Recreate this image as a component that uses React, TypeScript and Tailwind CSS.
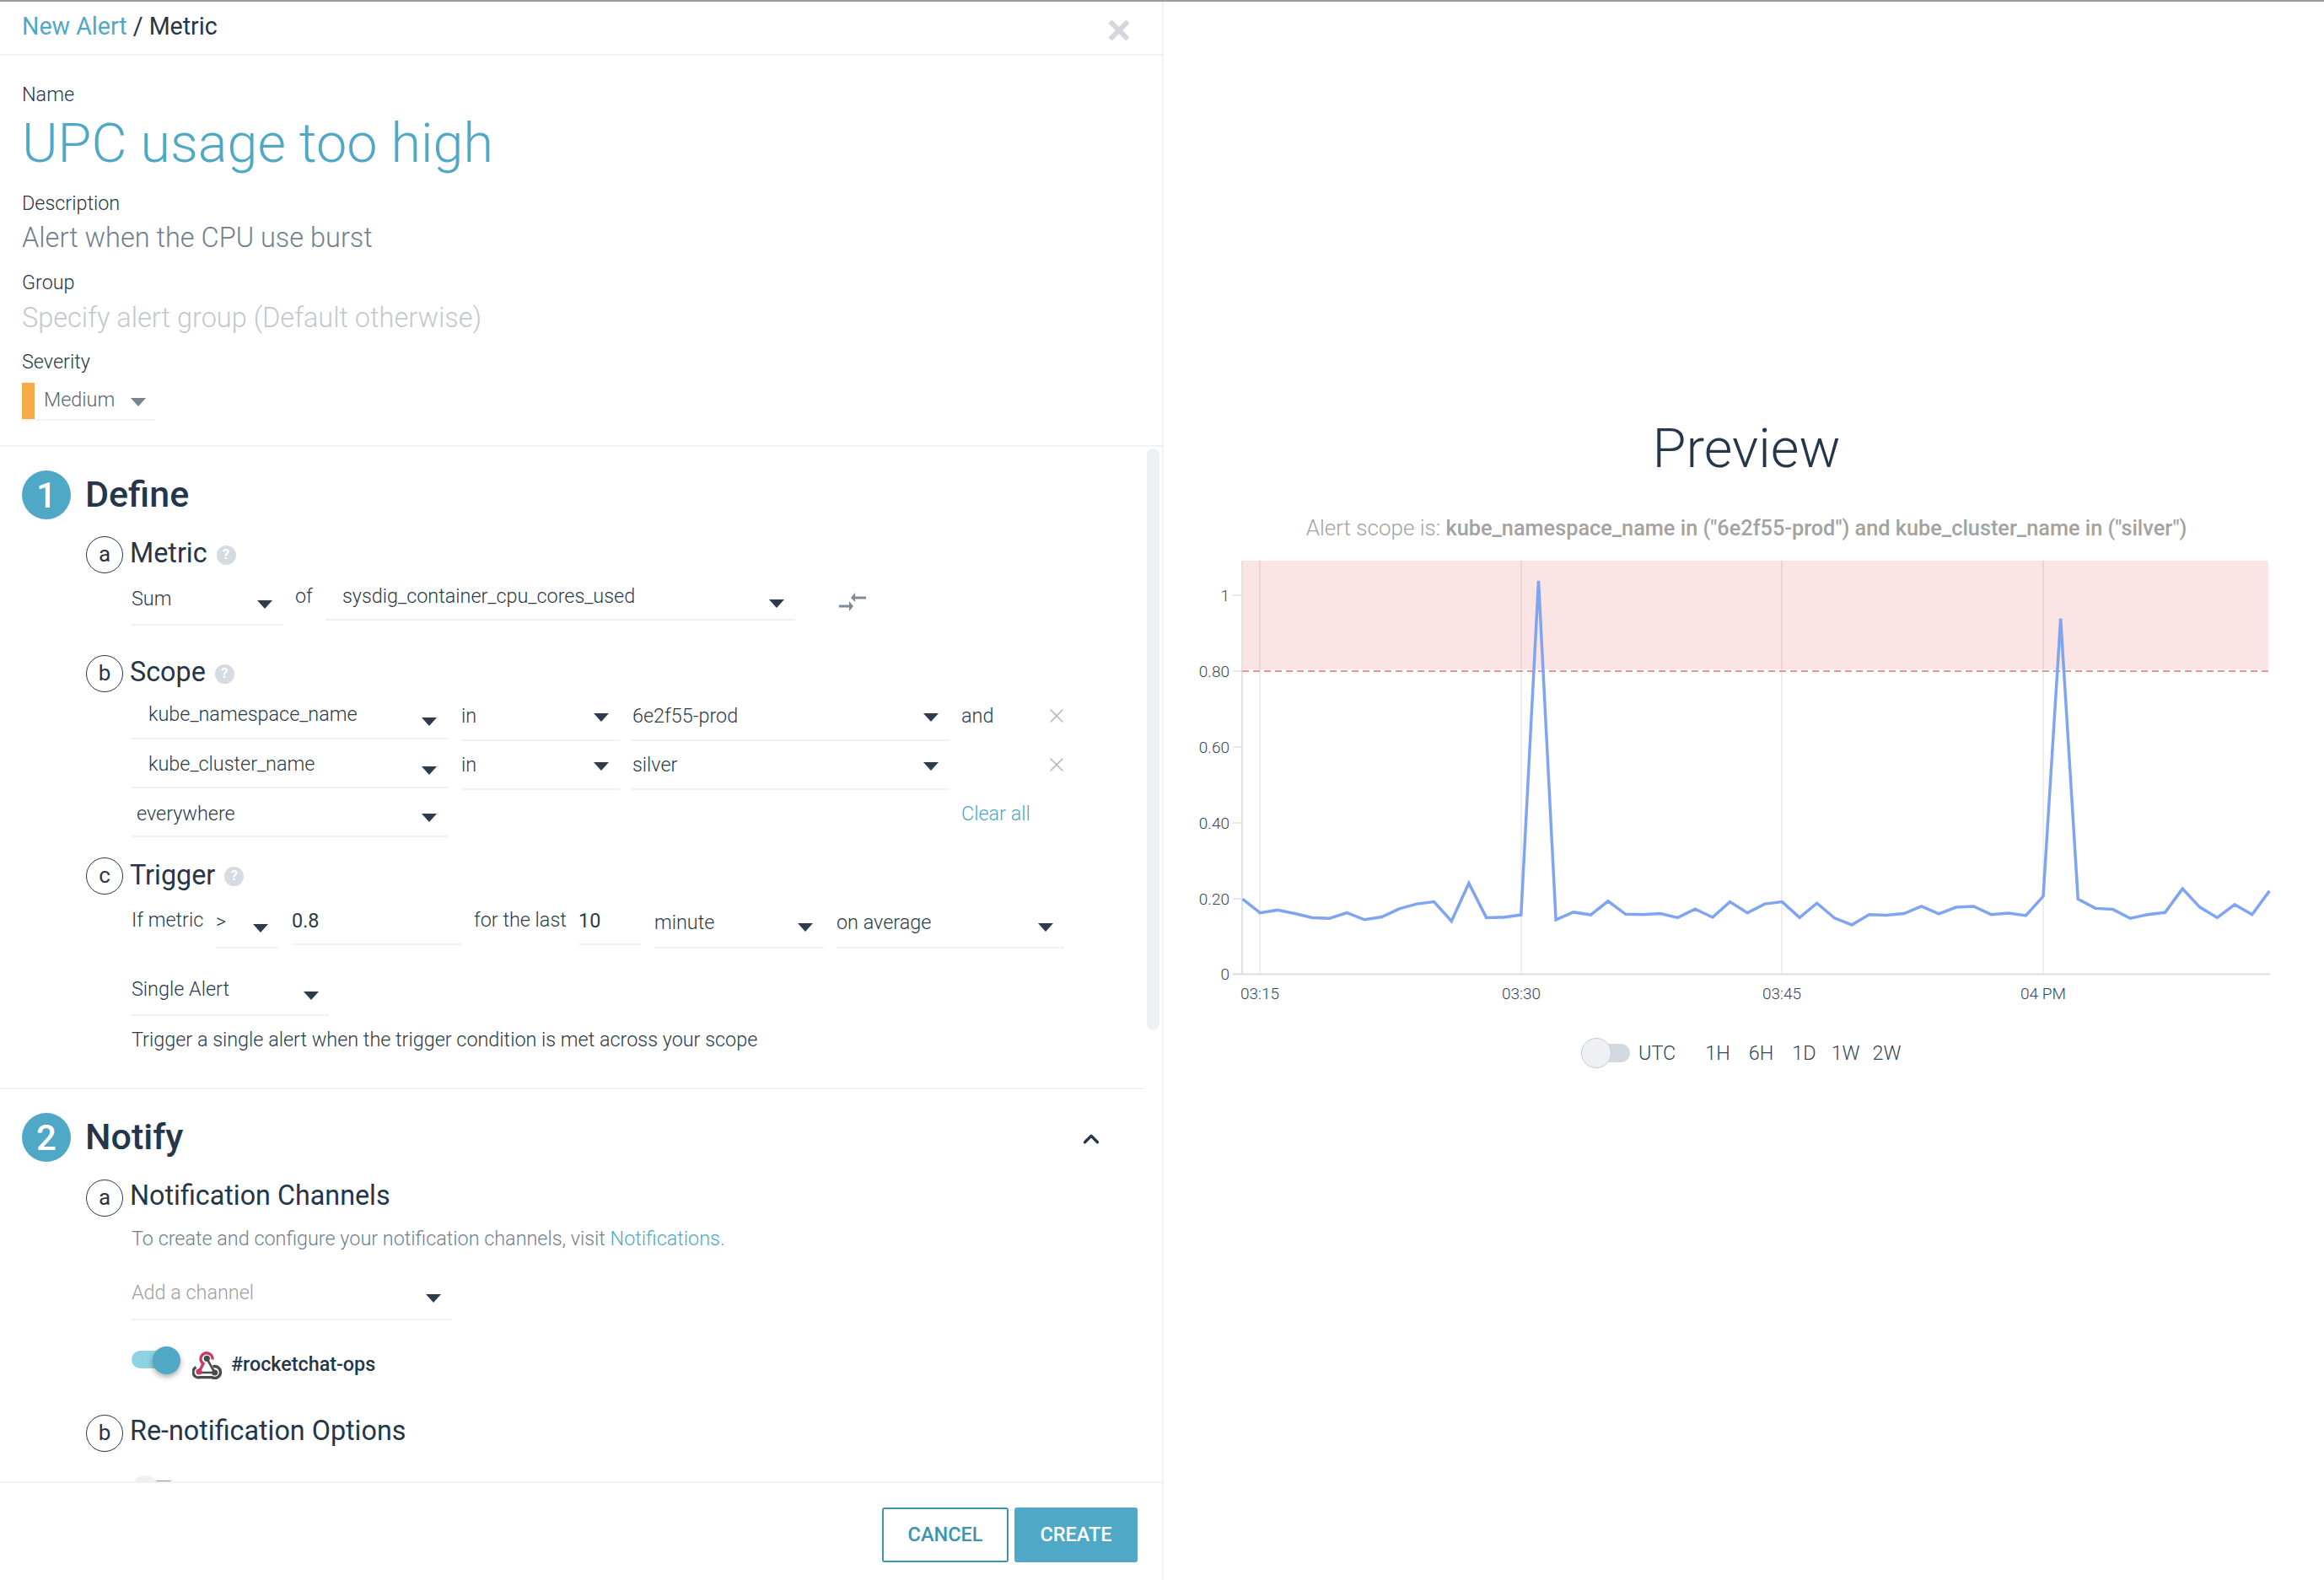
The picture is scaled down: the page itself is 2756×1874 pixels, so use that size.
import { ChevronUp, X } from 'lucide-react'

const fontStack = { fontFamily: 'Roboto, "Noto Sans", sans-serif' }

// values read off the reference at one minute steps
const SERIES = [
  1047, 1087, 1079, 1089, 1101, 1103, 1087, 1107, 1099, 1075, 1061, 1055, 1111, 1001, 1101, 1100, 1093, 122,
  1107, 1085, 1093, 1053, 1091, 1092, 1089, 1101, 1076, 1100, 1055, 1087, 1061, 1055, 1101, 1059, 1102, 1122,
  1092, 1094, 1089, 1068, 1090, 1071, 1068, 1092, 1088, 1095, 1039, 232, 1047, 1074, 1077, 1103, 1092, 1086,
  1017, 1071, 1101, 1063, 1092, 1023,
]

const points = SERIES.map((z, i) => `${(1473.6 + i * 20.64).toFixed(1)},${(640 + z / 2.45).toFixed(1)}`).join(' ')

function Caret({ className = '', color = '#2d3b4c' }: { className?: string; color?: string }) {
  return (
    <svg width="18" height="10" viewBox="0 0 18 10" className={`shrink-0 ${className}`}>
      <path d="M0 0h18L9 10z" fill={color} />
    </svg>
  )
}

function Sel({
  text,
  className,
  caret,
  textClass = 'text-[#2b3a4b]',
}: {
  text: string
  className: string
  caret?: string
  textClass?: string
}) {
  return (
    <div className={`flex shrink-0 items-start justify-between border-b-2 border-[#eff1f4] ${className}`}>
      <span className={`text-[23.4px] leading-[30px] font-light ${textClass}`}>{text}</span>
      {caret && <Caret className={caret} />}
    </div>
  )
}

function Step({ n, label }: { n: string; label: string }) {
  return (
    <div className="flex h-[58px] items-center">
      <div className="flex h-[58px] w-[58px] shrink-0 items-center justify-center rounded-full bg-[#4fa8c5] text-[42px] font-medium text-white">
        {n}
      </div>
      <span className="ml-[17px] pb-[2px] text-[43px] font-medium text-[#26364a]">{label}</span>
    </div>
  )
}

function Help({ className }: { className: string }) {
  return (
    <span
      className={`flex h-[23px] w-[23px] items-center justify-center rounded-full bg-[#d5dbe3] text-[17px] font-bold text-white ${className}`}
    >
      ?
    </span>
  )
}

function SubHead({
  letter,
  label,
  help,
  className = '',
  labelClass = 'pb-[4px]',
}: {
  letter: string
  label: string
  help?: boolean
  className?: string
  labelClass?: string
}) {
  return (
    <div className={`flex h-[44px] items-center ${className}`}>
      <div className="flex h-[44px] w-[44px] shrink-0 items-center justify-center rounded-full border border-[#26364a] pb-[2px] text-[26px] text-[#26364a]">
        {letter}
      </div>
      <span className={`ml-[8px] text-[32.3px] text-[#26364a] ${labelClass}`}>{label}</span>
      {help && <Help className="ml-[11px]" />}
    </div>
  )
}

function RowX() {
  return <X size={28} strokeWidth={1.3} color="#b5b5b5" className="mt-[14px] shrink-0" />
}

function WebhookIcon() {
  return (
    <svg width="36" height="33" viewBox="0 0 36 33" fill="none" className="mt-[6px] shrink-0">
      <path d="M8 24L13 14.500A7 7 0 1 1 24 9.500" stroke="#c73a63" strokeWidth="3.4" />
      <path d="M17.3 8.300L26.7 25H9" stroke="#4b4b4b" strokeWidth="2.6" />
      <path d="M24.500 17.800A7 7 0 1 1 23 30.600H9A6.500 6.500 0 0 1 4.500 18.500" stroke="#4b4b4b" strokeWidth="3.4" />
      <circle cx="17.3" cy="8.300" r="3.6" fill="#4b4b4b" />
      <circle cx="8" cy="24" r="3.6" fill="#c73a63" />
      <circle cx="26.7" cy="25" r="3.6" fill="#4b4b4b" />
    </svg>
  )
}

function SwapIcon() {
  return (
    <svg width="32" height="22" viewBox="0 0 32 22" className="ml-[52px] mt-[23px] shrink-0" fill="#7a8a9a">
      <path d="M32 4.500v3H19V11l-5-5 5-6v4.500z" />
      <path d="M0 14.500h12V10l5 6-5 6v-4.500H0z" />
    </svg>
  )
}

function Chart() {
  const yTicks: [string, number][] = [
    ['1', 707],
    ['0.80', 797],
    ['0.60', 887],
    ['0.40', 977],
    ['0.20', 1067],
    ['0', 1156],
  ]
  const xTicks: [string, number][] = [
    ['03:15', 1494],
    ['03:30', 1804],
    ['03:45', 2113],
    ['04 PM', 2423],
  ]
  return (
    <svg width="1376" height="550" viewBox="1380 650 1376 550" className="block" style={fontStack}>
      <rect x="1473" y="666" width="1217" height="129" fill="#fbe5e4" />
      {xTicks.map(([, x]) => (
        <line key={x} x1={x} x2={x} y1="666" y2="1156" stroke="#000" strokeOpacity="0.09" strokeWidth="1.500" />
      ))}
      <line x1="1473" x2="1473" y1="666" y2="1156" stroke="#e2e2e2" strokeWidth="2" />
      <line x1="1462" x2="2692" y1="1156.500" y2="1156.500" stroke="#dddddd" strokeWidth="2" />
      <line x1="1473" x2="2690" y1="797" y2="797" stroke="#f5918c" strokeWidth="2" strokeDasharray="8 5" />
      {yTicks.map(([label, y]) => (
        <g key={label}>
          <line x1="1462" x2="1473" y1={y} y2={y} stroke="#e2e2e2" strokeWidth="1.500" />
          <text x="1458" y={y + 7} textAnchor="end" fontSize="19" fontWeight="300" fill="#33455a">
            {label}
          </text>
        </g>
      ))}
      {xTicks.map(([label, x]) => (
        <text key={label} x={x} y="1186" textAnchor="middle" fontSize="19" fontWeight="300" fill="#33455a">
          {label}
        </text>
      ))}
      <polyline points={points} fill="none" stroke="#7fa5f2" strokeWidth="3.5" strokeLinejoin="miter" />
    </svg>
  )
}

export default function App() {
  return (
    <div className="flex h-[1874px] w-[2756px] flex-col overflow-hidden bg-white" style={fontStack}>
      <div className="h-[2px] shrink-0 bg-[#9c9c9c]" />
      <div className="flex min-h-0 flex-1">
        {/* left: alert form */}
        <div className="flex w-[1380px] shrink-0 flex-col border-r-2 border-[#f0f1f3]">
          <div className="flex h-[64px] shrink-0 items-start justify-between border-b-2 border-[#f0f2f5] pl-[26px] pr-[30px]">
            <div className="mt-[11px] text-[28.6px] leading-[36px] text-[#26364a]">
              <span className="text-[#4fa8c5]">New Alert</span> / Metric
            </div>
            <X size={42} strokeWidth={3.4} strokeLinecap="butt" color="#d3d6da" className="mt-[13px]" />
          </div>

          <div className="h-[464px] shrink-0 border-b-2 border-[#f0f2f5] pl-[26px] pt-[32px]">
            <div className="text-[23.4px] leading-[28px] font-light text-[#26364a]">Name</div>
            <div className="mt-[6px] text-[64.800px] leading-[76px] font-light text-[#4fa8c5]">UPC usage too high</div>
            <div className="mt-[19px] text-[23.4px] leading-[28px] font-light text-[#26364a]">Description</div>
            <div className="mt-[8px] text-[32.5px] leading-[38px] font-light text-[#6f8092]">Alert when the CPU use burst</div>
            <div className="mt-[20px] text-[23.4px] leading-[28px] font-light text-[#26364a]">Group</div>
            <div className="mt-[9px] text-[32.5px] leading-[38px] font-light text-[#c2c8cf]">Specify alert group (Default otherwise)</div>
            <div className="mt-[19px] text-[23.4px] leading-[28px] font-light text-[#26364a]">Severity</div>
            <div className="mt-[11px] flex h-[45px] w-[158px] border-b-2 border-[#f0f2f5]">
              <div className="h-[43px] w-[15px] bg-[#f4ac4a]" />
              <span className="ml-[11px] mt-[5px] text-[23.4px] leading-[30px] font-light text-[#566778]">Medium</span>
              <Caret className="ml-[19px] mt-[18px]" color="#76858f" />
            </div>
          </div>

          <div className="relative min-h-0 flex-1 overflow-hidden">
            {/* scrollbar */}
            <div className="absolute left-[1360px] top-[2px] h-[690px] w-[15px] rounded-full bg-[#eef0f4]" />

            <div className="w-[1357px] border-b-2 border-[#f0f2f5] pb-[42px] pt-[28px] pl-[26px]">
              <Step n="1" label="Define" />
              <div className="pl-[76px]">
                <SubHead letter="a" label="Metric" help className="mt-[20px]" />
                <div className="flex items-start pl-[54px]">
                  <Sel text="Sum" className="h-[62px] w-[180px] pt-[15px]" caret="mt-[17px] mr-[13px]" />
                  <span className="ml-[14px] mt-[12px] w-[36px] text-[23.4px] leading-[30px] font-light text-[#2b3a4b]">of</span>
                  <Sel
                    text="sysdig_container_cpu_cores_used"
                    className="h-[56px] w-[557px] pl-[20px] pt-[12px]"
                    caret="mt-[19px] mr-[13px]"
                  />
                  <SwapIcon />
                </div>

                <SubHead letter="b" label="Scope" help className="mt-[35px]" />
                <div className="flex items-start pl-[54px]">
                  <Sel text="kube_namespace_name" className="h-[56px] w-[375px] pl-[20px] pt-[11px]" caret="mt-[19px] mr-[13px]" />
                  <Sel text="in" className="ml-[16px] h-[58px] w-[188px] pt-[13px]" caret="mt-[12px] mr-[13px]" />
                  <Sel text="6e2f55-prod" className="ml-[14px] h-[58px] w-[377px] pl-[1px] pt-[13px]" caret="mt-[12px] mr-[13px]" />
                  <span className="ml-[14px] mt-[13px] w-[99px] text-[23.4px] leading-[30px] font-light text-[#2b3a4b]">and</span>
                  <RowX />
                </div>
                <div className="flex items-start pl-[54px]">
                  <Sel text="kube_cluster_name" className="h-[56px] w-[375px] pl-[20px] pt-[12px]" caret="mt-[18px] mr-[13px]" />
                  <Sel text="in" className="ml-[16px] h-[58px] w-[188px] pt-[13px]" caret="mt-[12px] mr-[13px]" />
                  <Sel text="silver" className="ml-[14px] h-[58px] w-[377px] pl-[1px] pt-[13px]" caret="mt-[12px] mr-[13px]" />
                  <span className="ml-[14px] w-[99px]" />
                  <RowX />
                </div>
                <div className="flex items-start pl-[54px]">
                  <Sel text="everywhere" className="h-[56px] w-[375px] pl-[6px] pt-[13px]" caret="mt-[15px] mr-[13px]" />
                  <span className="ml-[609px] mt-[13px] text-[23.4px] leading-[30px] font-light text-[#4fa8c5]">Clear all</span>
                </div>

                <SubHead letter="c" label="Trigger" help className="mt-[24px]" labelClass="pb-[2px]" />
                <div className="flex items-start pl-[54px]">
                  <span className="mt-[15px] w-[100px] shrink-0 text-[23.4px] leading-[30px] font-light text-[#2b3a4b]">If metric</span>
                  <Sel text=">" className="h-[64px] w-[74px] pt-[17px]" caret="mt-[18px] mr-[12px]" />
                  <Sel text="0.8" className="ml-[16px] h-[60px] w-[201px] pt-[16px]" textClass="font-normal text-[#2b3a4b]" />
                  <span className="ml-[15px] mt-[15px] w-[124px] shrink-0 text-[23.4px] leading-[30px] font-light text-[#2b3a4b]">for the last</span>
                  <Sel text="10" className="h-[60px] w-[74px] pt-[16px]" textClass="font-normal text-[#2b3a4b]" />
                  <Sel text="minute" className="ml-[16px] h-[64px] w-[201px] pt-[18px]" caret="mt-[16px] mr-[13px]" />
                  <Sel text="on average" className="ml-[15px] h-[64px] w-[270px] pt-[18px]" caret="mt-[16px] mr-[13px]" />
                </div>
                <div className="pl-[54px]">
                  <Sel text="Single Alert" className="h-[80px] w-[234px] pt-[33px]" caret="mt-[18px] mr-[12px]" />
                  <div className="mt-[13px] text-[23.4px] leading-[30px] font-light text-[#2b3a4b]">
                    Trigger a single alert when the trigger condition is met across your scope
                  </div>
                </div>
              </div>
            </div>

            <div className="w-[1357px] pl-[26px] pt-[28px]">
              <div className="flex items-center justify-between pr-[48px]">
                <Step n="2" label="Notify" />
                <ChevronUp size={30} strokeWidth={2.6} color="#26364a" className="mt-[3px]" />
              </div>
              <div className="pl-[76px]">
                <SubHead letter="a" label="Notification Channels" className="mt-[21px]" labelClass="pb-[6px]" />
                <div className="mt-[11px] pl-[54px] text-[23.4px] leading-[30px] font-light text-[#6f8092]">
                  To create and configure your notification channels, visit <span className="text-[#4fa8c5]">Notifications.</span>
                </div>
                <div className="pl-[54px]">
                  <Sel text="Add a channel" className="h-[82px] w-[380px] pt-[34px]" caret="mt-[17px] mr-[13px]" textClass="text-[#9aa0a6]" />
                  <div className="mt-[31px] flex h-[39px] items-start">
                    <div className="relative h-[34px] w-[58px] shrink-0">
                      <div className="absolute left-0 top-[5px] h-[21px] w-[44px] rounded-full bg-[#8dd3e3]" />
                      <div className="absolute left-[25px] top-0 h-[33px] w-[33px] rounded-full bg-[#4fa8c5] shadow-[0_3px_6px_rgba(0,0,0,0.35)]" />
                    </div>
                    <div className="ml-[14px]">
                      <WebhookIcon />
                    </div>
                    <span className="ml-[10px] mt-[6px] text-[23.3px] leading-[30px] font-medium text-[#26364a]">#rocketchat-ops</span>
                  </div>
                </div>
                <SubHead letter="b" label="Re-notification Options" className="mt-[42px]" labelClass="pb-[6px]" />
                <div className="relative mt-[28px] ml-[54px] h-[34px] w-[58px]">
                  <div className="absolute left-[20px] top-[6px] h-[21px] w-[34px] rounded-full bg-[#8a8f94]" />
                  <div className="absolute left-0 top-0 h-[33px] w-[33px] rounded-full bg-[#eef0f3]" />
                </div>
              </div>
            </div>
          </div>

          <div className="flex h-[117px] shrink-0 items-start justify-end gap-[7px] border-t-2 border-[#f0f1f3] pr-[29px] pt-[29px]">
            <button className="h-[65px] w-[150px] rounded-[3px] border-2 border-[#3f93ad] bg-white text-[23.5px] font-medium text-[#3f93ad]">
              CANCEL
            </button>
            <button className="h-[65px] w-[146px] rounded-[3px] bg-[#4fa8c5] text-[23.5px] font-medium text-white">CREATE</button>
          </div>
        </div>

        {/* right: preview */}
        <div className="flex min-w-0 flex-1 flex-col">
          <div className="mt-[486px] pl-[6px] text-center text-[65px] leading-[88px] font-light text-[#26364a]">Preview</div>
          <div className="mt-[35px] pl-[6px] text-center text-[26px] leading-[30px] font-light text-[#a3a3a3]">
            Alert scope is: <span className="text-[25.3px] font-medium">kube_namespace_name in ("6e2f55-prod") and kube_cluster_name in ("silver")</span>
          </div>
          <div className="mt-[7px]">
            <Chart />
          </div>
          <div className="mt-[32px] flex items-center pl-[495px] text-[23.4px] leading-[36px] font-light text-[#33455a]">
            <div className="relative h-[36px] w-[58px] shrink-0">
              <div className="absolute left-[10px] top-[7px] h-[22px] w-[48px] rounded-full bg-[#d3d9e0]" />
              <div className="absolute left-0 top-0 h-[36px] w-[36px] rounded-full border border-[#c2cad2] bg-[#eef0f4]" />
            </div>
            <span className="ml-[10px]">UTC</span>
            <span className="ml-[35px]">1H</span>
            <span className="ml-[22px]">6H</span>
            <span className="ml-[22px]">1D</span>
            <span className="ml-[18px]">1W</span>
            <span className="ml-[15px]">2W</span>
          </div>
        </div>
      </div>
    </div>
  )
}
